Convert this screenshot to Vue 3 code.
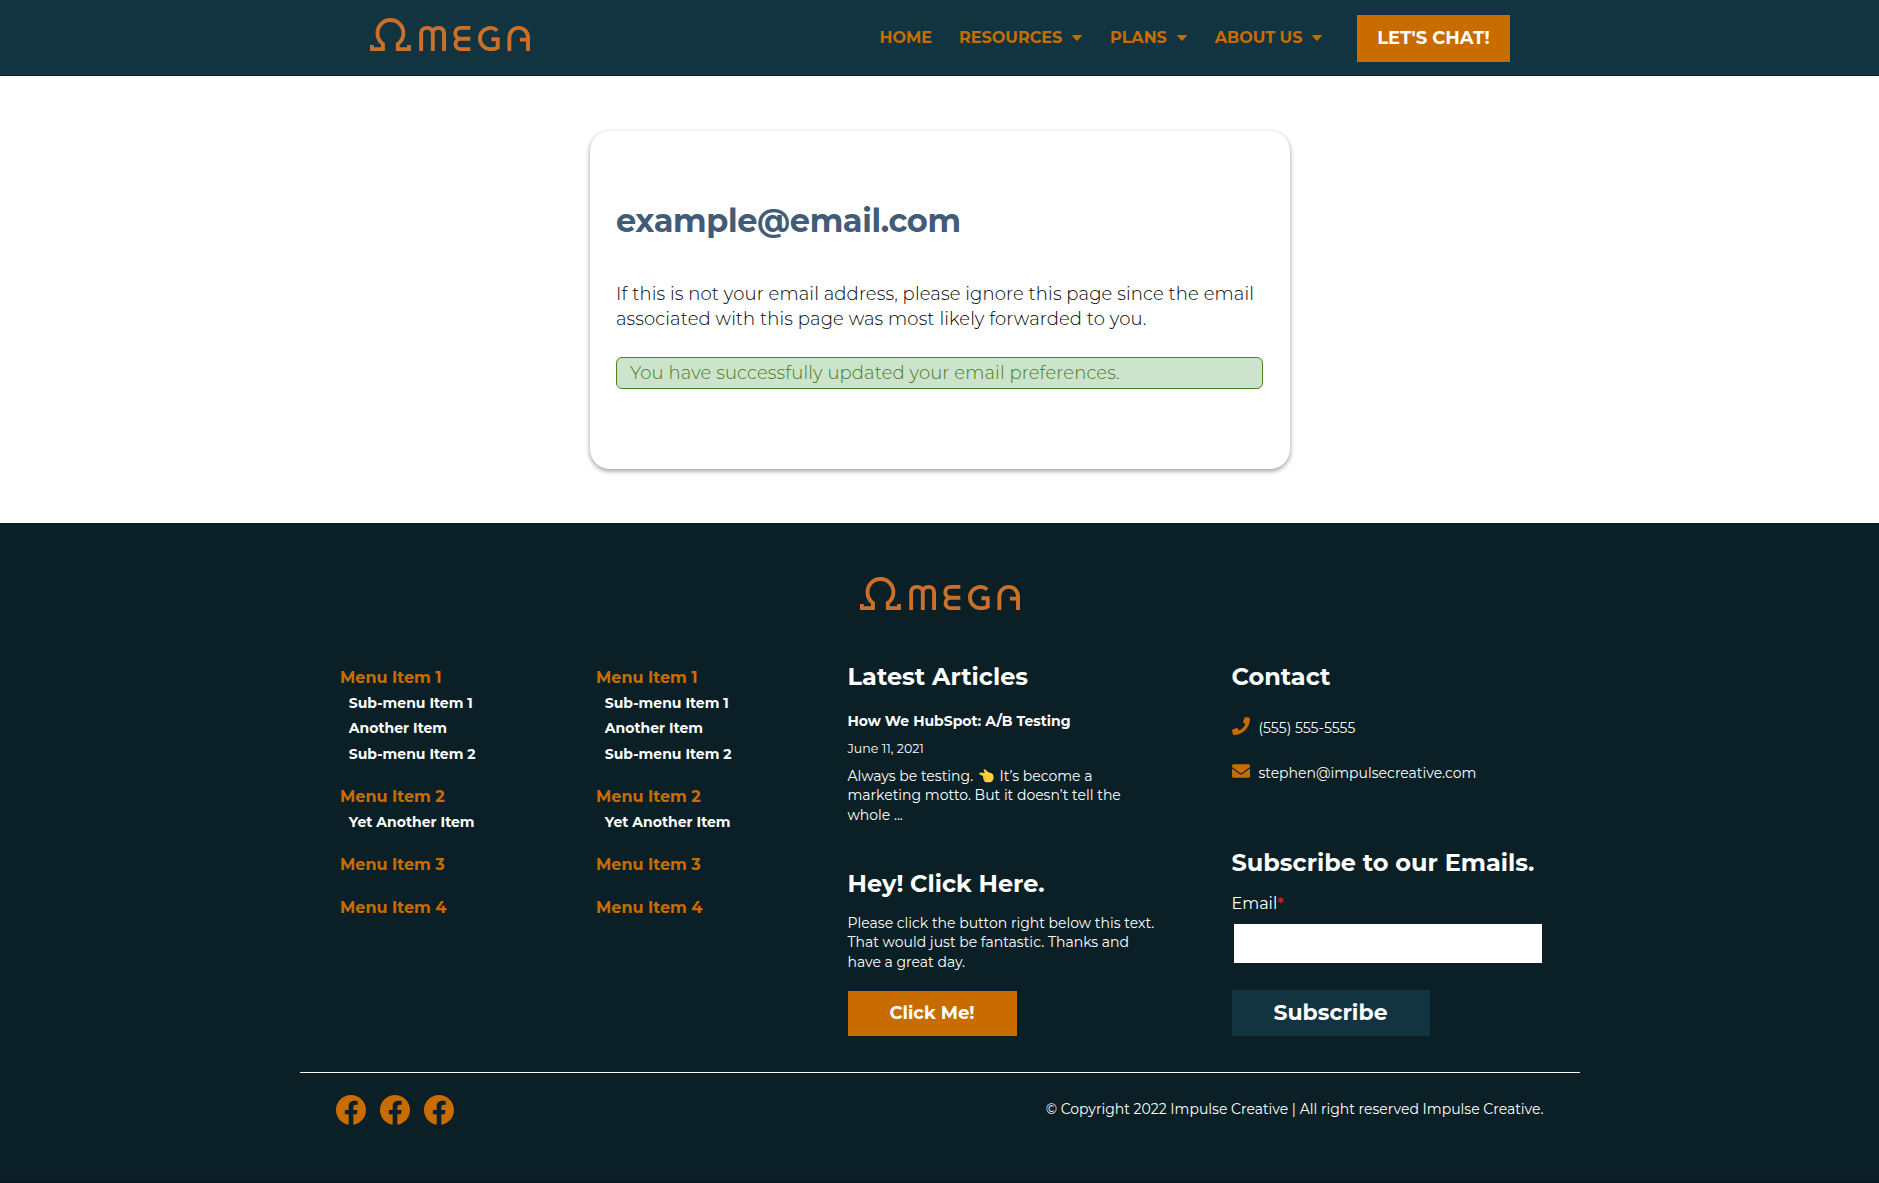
<script setup>
import { h } from 'vue'

const logoPaths = [
  'M1.8 27V31.2H13V26C9 23.2 7.5 19.5 7.5 15A13 13 0 0 1 33.5 15C33.5 19.5 32 23.2 27.9 26V31.2H39.1V27',
  'M51.3 33V15.5Q51.3 9.8 57.2 9.8Q63 9.8 63 15.5V33M63 15.5Q63 9.8 68.8 9.8Q74.3 9.8 74.3 15.5V33',
  'M100.7 9.8H91a5.5 5.5 0 0 0 0 11H100.7M91 20.8a5.2 5.2 0 0 0 0 10.4H100.7',
  'M127.6 12.6Q124.6 9.8 121 9.8A10.7 10.7 0 0 0 121 31.2Q125.5 31.2 128.1 29.6V21.3H121.8',
  'M139.8 33V19.2A9.35 9.4 0 0 1 158.5 19.2V33M150.3 21.6H158.5',
]

const OmegaLogo = () =>
  h('svg', { width: 160, height: 33, viewBox: '0 0 160.5 33', fill: 'none', stroke: '#cb702a', 'stroke-width': 3.9 },
    logoPaths.map((d) => h('path', { d })))

const nav = [
  { label: 'HOME', cls: 'home' },
  { label: 'RESOURCES', cls: 'resources', caret: true },
  { label: 'PLANS', cls: 'plans', caret: true },
  { label: 'ABOUT US', cls: 'about', caret: true },
]

const menu = [
  { label: 'Menu Item 1', items: ['Sub-menu Item 1', 'Another Item', 'Sub-menu Item 2'] },
  { label: 'Menu Item 2', items: ['Yet Another Item'] },
  { label: 'Menu Item 3', items: [] },
  { label: 'Menu Item 4', items: [] },
]
</script>

<template>
  <div class="page">
    <header class="header">
      <div class="header-inner">
        <OmegaLogo class="header-logo" />
        <nav class="nav">
          <a v-for="n in nav" :key="n.label" class="nav-link" :class="n.cls">
            <span>{{ n.label }}</span>
            <svg v-if="n.caret" class="caret" width="10" height="6" viewBox="0 0 10 6"><path d="M.9 0H9.1Q10.2 .1 9.6 1L5.6 5.5Q5 6 4.4 5.5L.4 1Q-.2 .1 .9 0Z" fill="#c96c00" /></svg>
          </a>
        </nav>
        <a class="chat">LET'S CHAT!</a>
      </div>
    </header>

    <main class="main">
      <section class="card">
        <h1>example@email.com</h1>
        <p class="note">If this is not your email address, please ignore this page since the email<br />associated with this page was most likely forwarded to you.</p>
        <div class="alert">You have successfully updated your email preferences.</div>
      </section>
    </main>

    <footer class="footer">
      <div class="footer-logo"><OmegaLogo /></div>
      <div class="columns">
        <ul v-for="c in 2" :key="c" class="menu">
          <li v-for="m in menu" :key="m.label" class="menu-group">
            <a class="menu-title">{{ m.label }}</a>
            <a v-for="s in m.items" :key="s" class="menu-sub">{{ s }}</a>
          </li>
        </ul>

        <div class="col">
          <h3>Latest Articles</h3>
          <a class="post-title">How We HubSpot: A/B Testing</a>
          <div class="post-date">June 11, 2021</div>
          <p class="copy post-copy">Always be testing. <svg class="hand" width="15" height="14" viewBox="0 0 15 14"><path d="M1.2 3.5 5.8 4 4.7 1.3Q4.8-.1 6.2.5L9.4 3.3 12.6 4.3Q14.8 5.2 14.6 8.6 14.4 12.8 11 13.2L7.2 13.2Q5 13 5.2 11.2 4.1 10.6 4.5 9.2 3.6 8.2 4.2 7L1.2 5.8Q.2 5.2.3 4.4.5 3.5 1.2 3.5Z" fill="#ffd23c" /><path d="M4.4 7.1 7.2 7.2M4.7 9.3H7.2M5.4 11.2H7.4" stroke="#e0a12c" stroke-width=".6" /></svg> It’s become a<br />marketing motto. But it doesn’t tell the<br />whole ...</p>
          <h3 class="hey">Hey! Click Here.</h3>
          <p class="copy">Please click the button right below this text.<br />That would just be fantastic. Thanks and<br />have a great day.</p>
          <a class="click">Click Me!</a>
        </div>

        <div class="col">
          <h3>Contact</h3>
          <div class="contact-row phone">
            <svg width="18" height="18" viewBox="0 0 512 512"><path fill="#c96c00" d="M493.4 24.6l-104-24c-11.3-2.6-22.9 3.3-27.5 13.9l-48 112c-4.2 9.8-1.4 21.3 6.9 28l60.6 49.6c-36 76.7-98.9 140.5-177.2 177.2l-49.6-60.6c-6.8-8.3-18.2-11.1-28-6.9l-112 48C3.9 366.5-2 378.1.6 389.4l24 104C27.1 504.2 36.7 512 48 512c256.1 0 464-207.5 464-464 0-11.2-7.7-20.9-18.6-23.4z" /></svg>
            <span>(555) 555-5555</span>
          </div>
          <div class="contact-row mail">
            <svg width="18" height="18" viewBox="0 0 512 512"><path fill="#c96c00" d="M502.3 190.8c3.9-3.1 9.7-.2 9.7 4.7V400c0 26.5-21.5 48-48 48H48c-26.5 0-48-21.5-48-48V195.6c0-5 5.7-7.8 9.7-4.7 22.4 17.4 52.1 39.5 154.1 113.6 21.1 15.4 56.7 47.8 92.2 47.6 35.7.3 72-32.8 92.3-47.6 102-74.1 131.6-96.3 154-113.7zM256 320c23.2.4 56.6-29.2 73.4-41.4 132.7-96.3 142.8-104.7 173.4-128.7 5.8-4.5 9.2-11.5 9.2-18.9v-19c0-26.5-21.5-48-48-48H48c-26.5 0-48 21.5-48 48v19c0 7.4 3.4 14.3 9.2 18.9 30.6 23.9 40.7 32.4 173.4 128.7 16.8 12.2 50.2 41.8 73.4 41.4z" /></svg>
            <span>stephen@impulsecreative.com</span>
          </div>
          <h3 class="subscribe-title">Subscribe to our Emails.</h3>
          <label class="label" for="email">Email<span class="req">*</span></label>
          <input id="email" class="input" type="email" />
          <button class="subscribe">Subscribe</button>
        </div>
      </div>

      <div class="bottom">
        <div class="social">
          <svg v-for="i in 3" :key="i" width="30" height="30" viewBox="8 8 496 496"><path fill="#c96c00" d="M504 256C504 119 393 8 256 8S8 119 8 256c0 123.78 90.69 226.38 209.25 245V327.69h-63V256h63v-54.64c0-62.15 37-96.48 93.67-96.48 27.14 0 55.52 4.84 55.52 4.84v61h-31.28c-30.8 0-40.41 19.12-40.41 38.73V256h68.78l-11 71.69h-57.78V501C413.31 482.38 504 379.78 504 256z" /></svg>
        </div>
        <div class="copyright">© Copyright 2022 Impulse Creative | All right reserved Impulse Creative.</div>
      </div>
    </footer>
  </div>
</template>

<style>
body { margin: 0; }
</style>

<style scoped>
.page { height: 1183px; overflow: hidden; display: flex; flex-direction: column; background: #fff; font-family: Montserrat, Inter, sans-serif; }
.page *, .page { box-sizing: border-box; }
svg { display: block; flex: none; }
h1, h3, p, ul { margin: 0; padding: 0; }
ul { list-style: none; }

.header { height: 76px; flex: none; padding-left: 1px; background: #123440; border-bottom: 1px solid #0c2038; }
.header-inner { width: 1140px; height: 75px; margin: 0 auto; display: flex; align-items: flex-start; }
.header-logo { margin-top: 18px; }
.nav { display: flex; height: 75px; align-items: center; margin-left: 349.6px; flex: none; width: 477.4px; }
.nav-link { display: flex; align-items: center; color: #c96c00; font-weight: 700; font-size: 16px; line-height: 24px; white-space: nowrap; }
.nav-link.home { width: 79.5px; }
.nav-link.resources { width: 151px; }
.nav-link.plans { width: 104.7px; }
.caret { margin-left: 10px; }
.chat { margin-top: 15px; width: 153px; height: 47px; flex: none; background: #c96c00; color: #fff; font-weight: 700; font-size: 18px; line-height: 46px; text-align: center; white-space: nowrap; }

.main { height: 447px; flex: none; padding: 55px 0 0 1px; }
.card { width: 700px; height: 338px; margin: 0 auto; padding: 70px 26px 0; border-radius: 20px; background: #fff; box-shadow: 0 2px 5px rgba(0, 0, 0, 0.4); }
h1 { color: #425b76; font-size: 32px; font-weight: 700; line-height: 40px; letter-spacing: -0.37px; }
.note { margin-top: 41px; color: #000; font-size: 18px; font-weight: 300; line-height: 25px; letter-spacing: 0.12px; white-space: nowrap; }
.alert { width: 647px; margin-top: 25px; height: 32px; border: 1px solid #4a8420; border-radius: 6px; background: #cde3cb; color: #447a1c; padding-left: 13px; font-size: 18px; font-weight: 300; line-height: 30px; letter-spacing: 0.125px; }

.footer { height: 660px; flex: none; padding-left: 1px; background: #0a2026; border-bottom: 1px solid #06151c; color: #fff; }
.footer-logo { display: flex; justify-content: center; padding-top: 54px; }
.columns { display: grid; grid-template-columns: 256px 256px 384px 384px; width: 1280px; height: 462px; margin: 0 auto; }
.menu { padding: 55px 0 0 40px; }
.menu-group { margin-bottom: 17.6px; }
.menu-title, .menu-sub { display: block; font-weight: 700; white-space: nowrap; }
.menu-title { color: #c96c00; font-size: 16px; line-height: 25px; }
.menu-sub { margin-left: 8.8px; padding-top: 0.6px; font-size: 14px; line-height: 24.9px; }

.col { padding: 52px 0 0 35.5px; white-space: nowrap; }
h3 { font-size: 24px; font-weight: 700; line-height: 30px; }
.post-title { display: block; margin-top: 19px; font-size: 14px; font-weight: 700; line-height: 20px; }
.post-date { margin-top: 8px; font-size: 12.6px; line-height: 20px; }
.copy { font-size: 14px; line-height: 19.5px; }
.post-copy { margin-top: 7.7px; }
.hand { display: inline-block; margin: 0 1.9px 0 2.2px; vertical-align: -2px; }
.hey { margin-top: 44px; }
.hey + .copy { margin-top: 14.5px; }
.click { display: block; width: 169px; height: 45px; margin: 18.8px 0 0 0.5px; padding-right: 1px; background: #c96c00; font-size: 18px; font-weight: 700; line-height: 44px; text-align: center; }

.contact-row { display: flex; font-size: 14px; line-height: 20px; padding-left: 0.5px; gap: 8.4px; }
.phone { margin-top: 26px; }
.phone svg, .mail svg { margin-top: -1px; }
.mail { margin-top: 25px; }
.subscribe-title { margin-top: 64.5px; }
.label { display: block; margin-top: 16.5px; font-size: 16px; line-height: 20px; }
.req { color: #f01c1c; font-weight: 500; }
.input { display: block; width: 308px; height: 39px; margin: 10px 0 0 2.5px; border: 0; border-radius: 0; padding: 0; background: #fff; }
.subscribe { display: block; width: 198px; height: 46px; margin: 27px 0 0 0.5px; padding: 0 1px 1px 0; border: 0; background: #123440; color: #fff; font-family: inherit; font-size: 22px; font-weight: 700; line-height: 45px; }

.bottom { width: 1280px; height: 110px; margin: 0 auto; border-top: 1px solid #fff; display: flex; justify-content: space-between; padding: 22px 36.6px 0 36.4px; }
.social { display: flex; gap: 14px; }
.copyright { margin-top: 4px; font-size: 14px; line-height: 20px; white-space: nowrap; }
</style>
